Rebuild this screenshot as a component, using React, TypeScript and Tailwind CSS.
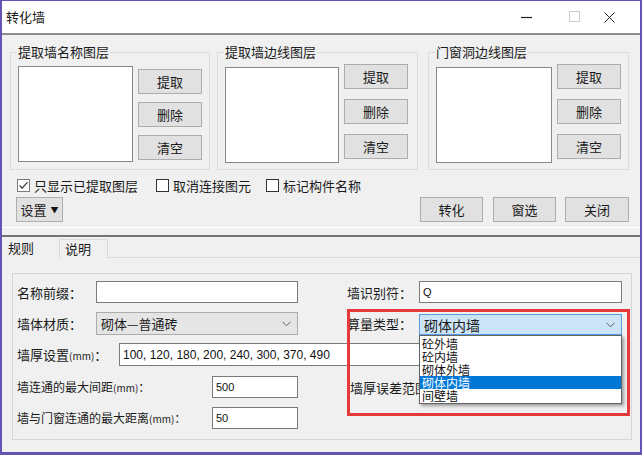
import React from "react";

const FONT = "font-['Noto_Sans_CJK_SC','Liberation_Sans',sans-serif]";

function Btn({ children, className }: { children: React.ReactNode; className: string }) {
  return (
    <div
      className={`flex items-center justify-center bg-[#e1e1e1] border border-[#adadad] text-[13px] leading-none text-[#1a1a1a] ${className}`}
    >
      {children}
    </div>
  );
}

function Check({ checked }: { checked?: boolean }) {
  return (
    <div className={`w-[13px] h-[13px] bg-white border ${checked ? "border-[#7a7a7a]" : "border-[#333]"} flex items-center justify-center shrink-0`}>
      {checked && (
        <svg width="11" height="11" viewBox="0 0 11 11">
          <path d="M1.5 5.5 L4.2 8.2 L9.5 2.2" fill="none" stroke="#333" strokeWidth="1.2" />
        </svg>
      )}
    </div>
  );
}

function Group({
  title,
  width,
  ml,
  listMt,
  btnMt,
  btnGap,
  listW,
}: {
  title: string;
  width: string;
  ml: string;
  listMt: string;
  btnMt: string;
  btnGap: string;
  listW: string;
}) {
  return (
    <fieldset className={`${width} ${ml} h-[125px] border border-[#dcdcdc] px-[7px] m-0 min-w-0`}>
      <legend className="text-[13px] leading-[14px] px-[1px] -ml-[1px] text-[#1a1a1a]">{title}</legend>
      <div className="flex pt-[5px]">
        <div className={`${listW} ${listMt} h-[96px] bg-white border border-[#828790]`} />
        <div className={`flex flex-col ml-[5px] ${btnMt} ${btnGap}`}>
          <Btn className="w-[64px] h-[25px]">提取</Btn>
          <Btn className="w-[64px] h-[25px]">删除</Btn>
          <Btn className="w-[64px] h-[25px]">清空</Btn>
        </div>
      </div>
    </fieldset>
  );
}

function Input({ className, value, small }: { className: string; value?: string; small?: boolean }) {
  return (
    <div
      className={`bg-white border border-[#7a7a7a] flex items-center pl-[3px] font-['Liberation_Sans',sans-serif] ${small ? "text-[11px]" : "text-[12px]"} text-[#111] ${className}`}
    >
      {value}
    </div>
  );
}

export default function App() {
  return (
    <div
      className={`w-[642px] h-[455px] overflow-hidden flex flex-col bg-[#f0f0f0] border-l-2 border-r-2 border-t border-b-[3px] border-[#6555b2] ${FONT} text-[#1a1a1a]`}
    >
      {/* title bar */}
      <div className="h-[32px] bg-white flex items-center shrink-0">
        <div className="ml-[4px] text-[13px]">转化墙</div>
        <div className="flex-1" />
        <svg width="12" height="12" viewBox="0 0 12 12" className="mr-[36px]">
          <line x1="0" y1="6.5" x2="11" y2="6.5" stroke="#222" strokeWidth="1.2" />
        </svg>
        <svg width="12" height="12" viewBox="0 0 12 12" className="mr-[23px]">
          <rect x="0.5" y="0.5" width="10" height="10" fill="none" stroke="#cccccc" strokeWidth="1" />
        </svg>
        <svg width="11" height="11" viewBox="0 0 11 11" className="mr-[25px]">
          <path d="M0.5 0.5 L10.5 10.5 M10.5 0.5 L0.5 10.5" fill="none" stroke="#222" strokeWidth="1" />
        </svg>
      </div>
      <div className="h-[2px] bg-[#8d8d8d] shrink-0" />

      {/* top section */}
      <div className="flex pl-[8px] mt-[10px] shrink-0">
        <Group title="提取墙名称图层" width="w-[200px]" ml="ml-0" listMt="mt-[2px]" btnMt="mt-[5px]" btnGap="gap-[8px]" listW="w-[115px]" />
        <Group title="提取墙边线图层" width="w-[201px]" ml="ml-[7px]" listMt="mt-[3px]" btnMt="mt-0" btnGap="gap-[10px]" listW="w-[114px]" />
        <Group title="门窗洞边线图层" width="w-[201px]" ml="ml-[10px]" listMt="mt-[3px]" btnMt="mt-0" btnGap="gap-[10px]" listW="w-[116px]" />
      </div>

      {/* checkbox row */}
      <div className="flex items-center h-[16px] mt-[7px] pl-[15px] text-[13px] leading-none shrink-0">
        <Check checked />
        <span className="ml-[4px]">只显示已提取图层</span>
        <div className="ml-[18px]">
          <Check />
        </div>
        <span className="ml-[4px]">取消连接图元</span>
        <div className="ml-[15px]">
          <Check />
        </div>
        <span className="ml-[4px]">标记构件名称</span>
      </div>

      {/* buttons row */}
      <div className="flex items-center h-[25px] mt-[4px] pl-[14px] shrink-0">
        <Btn className="w-[47px] h-[25px] gap-[4px]">
          <span>设置</span>
          <span className="text-[8px] text-[#111] leading-none">▼</span>
        </Btn>
        <div className="flex-1" />
        <Btn className="w-[63px] h-[25px]">转化</Btn>
        <Btn className="w-[63px] h-[25px] ml-[10px]">窗选</Btn>
        <Btn className="w-[64px] h-[25px] ml-[9px] mr-[11px]">关闭</Btn>
      </div>

      {/* separator */}
      <div className="h-px bg-white mt-[5px] shrink-0" />
      <div className="h-[2px] bg-[#747474] mt-[7px] shrink-0" />

      {/* tabs */}
      <div className="flex h-[21px] shrink-0 items-end">
        <div className="w-[55px] h-[21px] flex items-center pl-[6px] text-[13px]">规则</div>
        <div className="w-[49px] h-[19px] flex items-center pl-[5px] text-[13px] border-t border-l border-r border-[#d9d9d9] ml-[2px]">
          说明
        </div>
        <div className="flex-1 h-px bg-[#dadada]" />
      </div>

      {/* tab page */}
      <div className="flex-1 bg-[#f0f0f0]">
        <div className="relative ml-[10px] mt-[15px] w-[620px] h-[167px] border border-[#d6d6d6] pt-[7px] pl-[4px] text-[13px] leading-none">
          {/* row 1 */}
          <div className="flex items-center h-[22px]">
            <div className="w-[79px]">名称前缀：</div>
            <Input className="w-[202px] h-[22px]" />
            <div className="w-[72px] ml-[49px]">墙识别符：</div>
            <Input className="w-[203px] h-[22px]" value="Q" small />
          </div>
          {/* row 2 */}
          <div className="flex items-center h-[23px] mt-[9px]">
            <div className="w-[79px]">墙体材质：</div>
            <div className="w-[202px] h-[23px] bg-[#e5e5e5] border border-[#acacac] flex items-center pl-[4px] pr-[6px]">
              <span className="flex-1">砌体—普通砖</span>
              <svg width="9" height="6" viewBox="0 0 9 6">
                <path d="M0.5 0.8 L4.5 4.8 L8.5 0.8" fill="none" stroke="#666" strokeWidth="1" />
              </svg>
            </div>
            <div className="w-[72px] ml-[49px]">算量类型：</div>
            <div className="relative">
              <div className="w-[203px] h-[21px] mt-[2px] bg-[#cce4f7] border border-[#569de5] flex items-center pl-[4px] pr-[6px] text-[14px]">
                <span className="flex-1">砌体内墙</span>
                <svg width="9" height="6" viewBox="0 0 9 6">
                  <path d="M0.5 0.8 L4.5 4.8 L8.5 0.8" fill="none" stroke="#555" strokeWidth="1" />
                </svg>
              </div>
              <div className="absolute left-0 top-full z-20 w-[203px] bg-white border border-[#646464] shadow-[2px_2px_3px_rgba(0,0,0,0.35)] py-px text-[12px]">
                {["砼外墙", "砼内墙", "砌体外墙", "砌体内墙", "间壁墙"].map((t) => (
                  <div
                    key={t}
                    className={`h-[13px] leading-[13px] pl-[2px] ${t === "砌体内墙" ? "bg-[#0078d7] text-white" : "text-[#111]"}`}
                  >
                    {t}
                  </div>
                ))}
              </div>
            </div>
          </div>
          {/* row 3 */}
          <div className="flex items-center h-[23px] mt-[8px]">
            <div className="w-[102px] whitespace-nowrap">
              墙厚设置<span className="text-[10px]">(mm)</span>：
            </div>
            <Input className="w-[503px] h-[23px]" value="100, 120, 180, 200, 240, 300, 370, 490" />
          </div>
          {/* row 4 */}
          <div className="flex items-center h-[22px] mt-[10px]">
            <div className="w-[195px] whitespace-nowrap text-[12px]">
              墙连通的最大间距<span className="text-[10px]">(mm)</span>：
            </div>
            <Input className="w-[86px] h-[22px]" value="500" small />
            <div className="ml-[52px] whitespace-nowrap">墙厚误差范围</div>
          </div>
          {/* row 5 */}
          <div className="flex items-center h-[22px] mt-[9px]">
            <div className="w-[195px] whitespace-nowrap text-[12px]">
              墙与门窗连通的最大距离<span className="text-[10px]">(mm)</span>：
            </div>
            <Input className="w-[86px] h-[22px]" value="50" small />
          </div>

          {/* red annotation box */}
          <div className="absolute left-[334px] top-[35px] w-[283px] h-[107px] border-[3px] border-[#e8393a] z-30 pointer-events-none" />
        </div>
      </div>
    </div>
  );
}
